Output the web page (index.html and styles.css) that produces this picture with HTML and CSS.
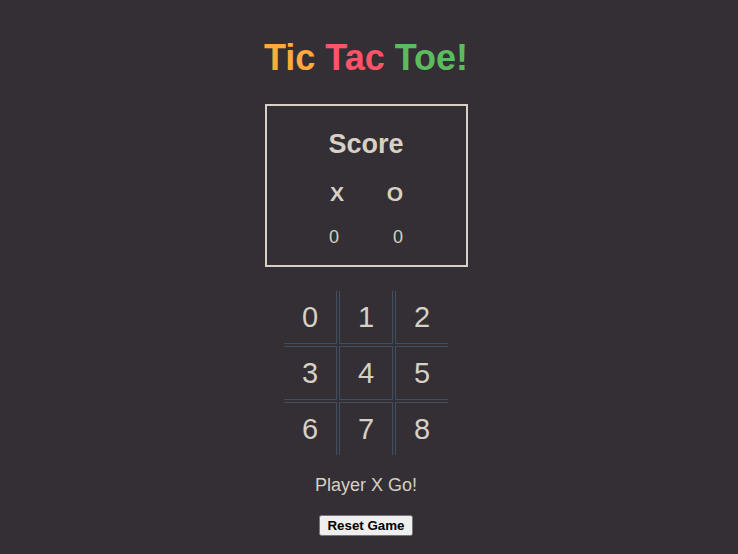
FILE: index.html
```html
<!DOCTYPE html>
<html lang="en">
<head>
<meta charset="utf-8">
<title>Tic Tac Toe!</title>
<link rel="stylesheet" href="styles.css">
</head>
<body>
<main class="app">
  <h1 class="title"><span class="t-tic">Tic</span> <span class="t-tac">Tac</span> <span class="t-toe">Toe!</span></h1>
  <section class="score">
    <h2 class="score-title">Score</h2>
    <div class="score-heads"><span class="score-col">X</span><span class="score-col">O</span></div>
    <div class="score-vals"><span class="score-col">0</span><span class="score-col">0</span></div>
  </section>
  <div class="board">
    <div class="cell c0">0</div>
    <div class="cell c1">1</div>
    <div class="cell c2">2</div>
    <div class="cell c3">3</div>
    <div class="cell c4">4</div>
    <div class="cell c5">5</div>
    <div class="cell c6">6</div>
    <div class="cell c7">7</div>
    <div class="cell c8">8</div>
  </div>
  <p class="status">Player X Go!</p>
  <button class="reset" type="button">Reset Game</button>
</main>
</body>
</html>
```
FILE: styles.css
```css
html, body {
  margin: 0;
  background: #332f35;
}
body {
  padding: 38px 6px 0 0;
  font-family: "Liberation Sans", Arial, sans-serif;
  font-size: 18px;
  color: #d8d0c4;
}
.app {
  display: flex;
  flex-direction: column;
  align-items: center;
}
.title {
  margin: 0;
  font-size: 36px;
  line-height: 40px;
  font-weight: bold;
}
.t-tic { color: #ffaa3c; }
.t-tac { color: #ff5468; }
.t-toe { color: #5dbb5d; }
.score {
  margin-top: 26px;
  box-sizing: border-box;
  width: 203px;
  border: 2px solid #d8d0c4;
  padding: 22px 0 18px;
  display: flex;
  flex-direction: column;
  align-items: center;
}
.score-title {
  margin: 0;
  font-size: 27px;
  line-height: 32px;
  font-weight: bold;
}
.score-heads {
  margin-top: 22px;
  display: flex;
  gap: 38px;
  font-size: 21px;
  line-height: 24px;
  font-weight: bold;
}
.score-vals {
  margin-top: 21px;
  display: flex;
  gap: 44px;
  font-size: 18px;
  line-height: 20px;
}
.score-col {
  width: 20px;
  text-align: center;
}
.board {
  margin-top: 22px;
  display: grid;
  grid-template-columns: auto auto auto;
  gap: 2px;
  padding: 2px;
}
.cell {
  width: 52px;
  height: 52px;
  display: flex;
  align-items: center;
  justify-content: center;
  font-size: 29px;
  color: #d8d0c4;
  border: 0 solid #3c4f64;
}
.c0 { border-right-width: 1px; border-bottom-width: 1px; }
.c1 { border-left-width: 1px; border-right-width: 1px; border-bottom-width: 1px; }
.c2 { border-left-width: 1px; border-bottom-width: 1px; }
.c3 { border-top-width: 1px; border-right-width: 1px; border-bottom-width: 1px; }
.c4 { border-width: 1px; }
.c5 { border-top-width: 1px; border-left-width: 1px; border-bottom-width: 1px; }
.c6 { border-top-width: 1px; border-right-width: 1px; }
.c7 { border-top-width: 1px; border-left-width: 1px; border-right-width: 1px; }
.c8 { border-top-width: 1px; border-left-width: 1px; }
.status {
  margin: 18px 0 0;
  font-size: 18px;
  line-height: 20px;
}
.reset {
  margin-top: 20px;
  font-family: "Liberation Sans", Arial, sans-serif;
  font-size: 13.333px;
  font-weight: bold;
  color: #000;
}
```
